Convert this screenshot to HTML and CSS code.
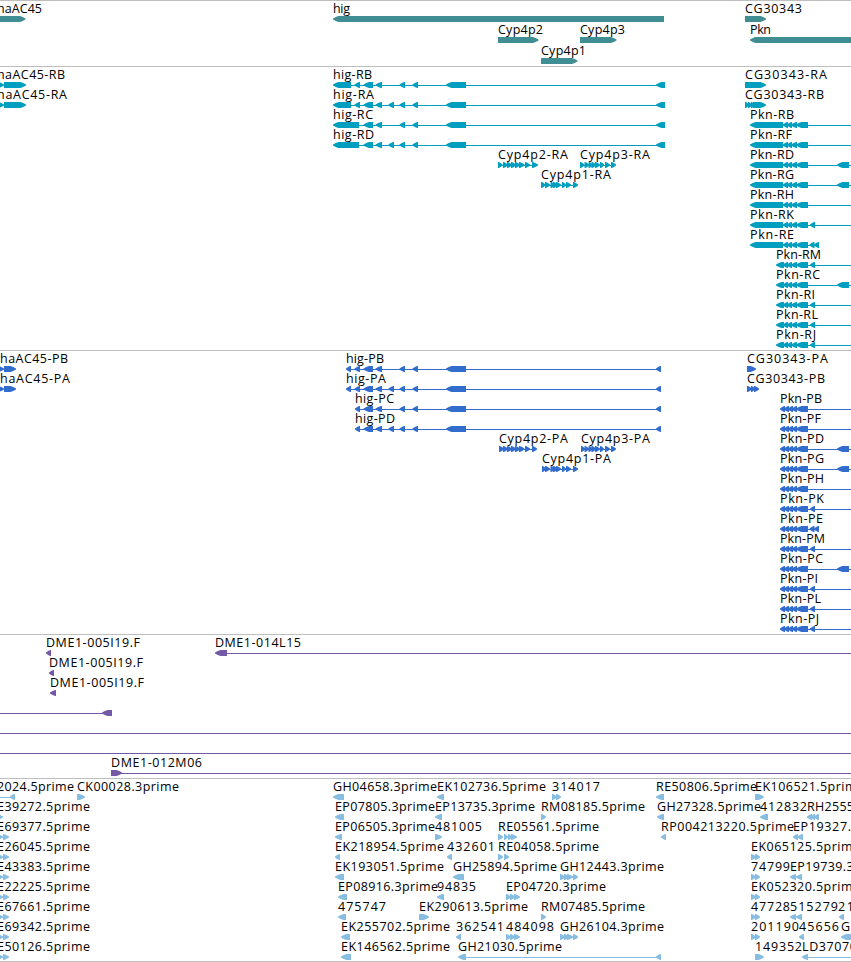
FILE: index.html
```html
<!DOCTYPE html>
<html lang="en">
<head>
<meta charset="utf-8">
<title>Genome tracks</title>
<link rel="stylesheet" href="styles.css">
</head>
<body>
<main class="browser" id="browser"></main>
<script src="tracks.js"></script>
</body>
</html>
```
FILE: styles.css
```css
* { box-sizing: border-box; }
body {
  margin: 0;
  background: #fff;
  overflow: hidden;
}
.browser {
  display: flex;
  flex-direction: column;
  width: 851px;
  height: 962px;
  border-bottom: 1px solid #bebebe;
  overflow: hidden;
}
.track {
  display: flex;
  flex-direction: column;
  flex: none;
  padding-top: 1px;
  border-top: 1px solid #bebebe;
}
.row {
  display: block;
  flex: none;
  width: 851px;
  height: 20px;
  overflow: visible;
}
.row text {
  font-family: "Open Sans", "Noto Sans", sans-serif;
  font-size: 12.5px;
  fill: #000;
}
.genes { height: 66px; color: #408e93; }
.genes .row { height: 21px; }
.transcripts { height: 284px; color: #009fc0; }
.proteins { height: 284px; color: #326dcd; }
.clones { height: 144px; color: #7459a7; }
.ests { height: 183px; color: #86bde0; }
.shape { fill: currentColor; }
```
FILE: tracks.js
```javascript
// Feature: [label, labelStart, labelEnd, glyphs]
// Glyphs: "<a:b" reverse arrow, ">a:b" forward arrow, "-a:b" intron line.
const pknBody = '<783:788 <787:792 <791:797 <796:808';
const pknP = '<780:785 <784:789 <788:793 <792:797 <796:808';
const pknM = '<776:784 ' + pknBody;
const higTail = '<363.5:373 <375.5:382 <399.5:405 <412.5:418 <446:466';
const extra = ' <388.5:394';
const cyp2 = '>498:502.5 >503:508 >507:512 >511:516 >515:520 >519:524.5 >525:530 >532:538 -500:536';
const cyp3 = '>580:584.5 >584.5:589 >588.5:593 >591.5:596 >595:600 >600:604 >605:610 >611:616 -582:614';
const cyp1 = '>541:545.5 >545:550 >550.5:555 >553:558 >556:561 >562:566 >566:571 >573:578 -543:576';

const rna = (name, glyphs) => ['Pkn-R' + name, 750, 794, '-783:851 <750:783 ' + pknBody + glyphs];
const rnaShort = (name, end, glyphs) => ['Pkn-R' + name, 776, end, '-783:851 ' + pknM + glyphs];
const prot = (name, end, glyphs) => ['Pkn-P' + name, 780, end, '-790:851 ' + pknP + glyphs];
const far = ' <837:849';
const near = ' <810:815';
const est = (name) => [name + '.5prime', -3, 90, '-0:5 >-3:3 >3:9'];

const tracks = {
  genes: [
    [['haAC45', -3, 42, '>-6:25.5'], ['hig', 333, 350, '<333:664'], ['CG30343', 745, 802, '>745:766']],
    [['Cyp4p2', 498, 543, '>498:538.5'], ['Cyp4p3', 580, 625, '>580:616.5'], ['Pkn', 750, 771, '<750:860']],
    [['Cyp4p1', 541, 586, '>541:577.5']]
  ],
  transcripts: [
    [['haAC45-RB', -3, 65, '>-2:4 >4:26'], ['hig-RB', 333, 372, '-340:660 <333:351 <354.5:360 ' + higTail + ' <656:665'], ['CG30343-RA', 745, 827, '>745:766']],
    [['haAC45-RA', -3, 67, '>-2:4 >4:26'], ['hig-RA', 333, 374, '-340:660 <333:351 <354.5:360 ' + higTail + extra + ' <656:665'], ['CG30343-RB', 745, 824, '>745:749 >748:752 >751:755 >753:766']],
    [['hig-RC', 333, 373, '-340:660 <333:359 ' + higTail + ' <656:665'], rna('B', '')],
    [['hig-RD', 333, 374, '-340:660 <333:359 ' + higTail + extra + ' <656:665'], ['Pkn-RF', 750, 792, '-783:851 <750:783 ' + pknBody]],
    [['Cyp4p2-RA', 498, 568, cyp2], ['Cyp4p3-RA', 580, 650, cyp3], rna('D', far)],
    [['Cyp4p1-RA', 541, 611, cyp1], rna('G', far)],
    [rna('H', '')],
    [rna('K', near)],
    [['Pkn-RE', 750, 794, '-783:819 <750:783 ' + pknBody + ' <809.5:814.5 <814:819']],
    [rnaShort('M', 821, near)],
    [rnaShort('C', 820, far)],
    [rnaShort('I', 815, near)],
    [rnaShort('L', 818, near)],
    [rnaShort('J', 816, near)]
  ],
  proteins: [
    [['haAC45-PB', 0, 68, '>-2:4 >4:16'], ['hig-PB', 346, 384, '-350:660 <346:351 <354.5:360 ' + higTail + ' <656:661'], ['CG30343-PA', 747, 828, '>747:756']],
    [['haAC45-PA', 0, 70, '>-2:4 >4:16'], ['hig-PA', 346, 386, '-350:660 <346:351 <354.5:360 ' + higTail + extra + ' <656:661'], ['CG30343-PB', 747, 825, '>747:752 >751:755 >754:759']],
    [['hig-PC', 355, 394, '-358:660 <355:360 ' + higTail + ' <656:661'], prot('B', 822, '')],
    [['hig-PD', 355, 395, '-358:660 <355:360 ' + higTail + extra + ' <656:661'], prot('F', 821, '')],
    [['Cyp4p2-PA', 499, 568, cyp2.replace('498:502.5', '499:504').replace('532:538', '532:537')], ['Cyp4p3-PA', 581, 650, cyp3.replace('580:584.5', '581:585')], prot('D', 824, far)],
    [['Cyp4p1-PA', 542, 611, cyp1.replace('541:545.5', '542:546')], prot('G', 824, far)],
    [prot('H', 824, '')],
    [prot('K', 824, near)],
    [['Pkn-PE', 780, 823, '-790:819 ' + pknP + ' <809.5:814.5 <814:819']],
    [prot('M', 825, near)],
    [prot('C', 823, far)],
    [prot('I', 818, near)],
    [prot('L', 821, near)],
    [prot('J', 819, near)]
  ],
  clones: [
    [['DME1-005I19.F', 46, 140, '<46:51'], ['DME1-014L15', 215, 301, '-220:851 <215:227']],
    [['DME1-005I19.F', 49, 143, '<49:54']],
    [['DME1-005I19.F', 50, 144, '<50:56']],
    [['', 0, 0, '-0:105 <102:112']],
    [['', 0, 0, '-0:851']],
    [['', 0, 0, '-0:851']],
    [['DME1-012M06', 111, 202, '-115:851 >111:122']]
  ],
  ests: [
    [['2024.5prime', -3, 74, '-0:12 <10:15'], ['CK00028.3prime', 77, 179, '>77:85'], ['GH04658.3prime', 333, 437, '<333:344'], ['EK102736.5prime', 437, 546, '<437:444'], ['314017', 552, 600, '>552:557 >556:561'], ['RE50806.5prime', 656, 757, '<656:664'], ['EK106521.5prime', 755, 864, '>755:764']],
    [['E39272.5prime', -3, 90, '>-3:3'], ['EP07805.3prime', 335, 435, '<335:344'], ['EP13735.3prime', 435, 535, '<435:442'], ['RM08185.5prime', 541, 645, '>541:546'], ['GH27328.5prime', 657, 761, '<657:664'], ['412832', 760, 807, '<760:768'], ['RH2555', 807, 854, '<807:812 <811:815 <814:819']],
    [est('E69377'), ['EP06505.3prime', 335, 435, '<335:342'], ['481005', 435, 482, '>435:442'], ['RE05561.5prime', 498, 599, '>498:503 >504:508 >508:512 >511:517'], ['RP004213220.5prime', 661, 794, '<661:666'], ['EP19327.', 793, 851, '<793:798 <797:803']],
    [est('E26045'), ['EK218954.5prime', 335, 444, '<335:340'], ['432601', 447, 495, '<447:452'], ['RE04058.5prime', 498, 599, '>498:503 >504:509'], ['EK065125.5prime', 751, 860, '>751:756 >755:760']],
    [est('E43383'), ['EK193051.5prime', 335, 444, '<335:344'], ['GH25894.5prime', 453, 557, '<453:464'], ['GH12443.3prime', 560, 664, '-562:575 >560:565 >564:569 >567:573 >573:578'], ['74799', 751, 790, '>751:756 >755:760'], ['EP19739.3prime', 790, 890, '<790:796 <796:802']],
    [est('E22225'), ['EP08916.3prime', 338, 438, '<338:347'], ['94835', 437, 476, '<437:444'], ['EP04720.3prime', 506, 606, '>506:511 >510:515 >514:520'], ['EK052320.5prime', 751, 860, '>751:756 >755:760']],
    [est('E67661'), ['475747', 338, 386, '<338:346'], ['EK290613.5prime', 419, 528, '>419:429'], ['RM07485.5prime', 541, 645, '>541:546'], ['47728', 751, 790, '>751:756 >755:760'], ['515279', 790, 838, '<790:796 <796:802'], ['21', 838, 854, '<839:844']],
    [est('E69342'), ['EK255702.5prime', 341, 450, '<341:350'], ['362541', 456, 504, '<456:461'], ['484098', 506, 554, '>506:511 >510:515 >514:520'], ['GH26104.3prime', 560, 664, '-562:575 >560:565 >564:569 >567:573 >573:578'], ['201190', 751, 799, '>751:756 >755:760'], ['45656', 799, 839, '<799:804'], ['G', 841, 850, '<841:853']],
    [est('E50126'), ['EK146562.5prime', 341, 450, '<341:351'], ['GH21030.5prime', 458, 562, '-464:658 <458:466 <656:661'], ['149352', 755, 802, '>755:764'], ['LD37070', 802, 857, '-806:851 <802:808']]
  ]
};

const NS = 'http://www.w3.org/2000/svg';
function add(parent, tag, attrs) {
  const el = document.createElementNS(NS, tag);
  for (const key in attrs) el.setAttribute(key, attrs[key]);
  parent.appendChild(el);
  return el;
}

function drawGlyph(svg, code) {
  const [a, b] = code.slice(1).split(':').map(Number);
  if (code[0] === '-') {
    add(svg, 'rect', { class: 'shape', x: a, y: 17, width: b - a, height: 1 });
    return;
  }
  const head = Math.min(5.5, b - a - 0.8);
  // Distance from the tip paired with y, listed clockwise from the upper tip edge.
  const tip = code[0] === '<' ? a : b;
  const dir = code[0] === '<' ? 1 : -1;
  const outline = [
    [0, 16.4], [head * 0.5, 15], [head, 14], [b - a, 14],
    [b - a, 20], [head, 20], [head * 0.5, 19], [0, 17.6]
  ];
  const points = outline.map(([d, y]) => (tip + dir * d) + ',' + y).join(' ');
  add(svg, 'polygon', { class: 'shape', points });
}

const browser = document.getElementById('browser');
for (const name in tracks) {
  const section = document.createElement('section');
  section.className = 'track ' + name;
  browser.appendChild(section);
  for (const features of tracks[name]) {
    const svg = add(section, 'svg', { class: 'row' });
    for (const [label, start, end, glyphs] of features) {
      glyphs.split(' ').filter(Boolean).forEach(code => drawGlyph(svg, code));
      if (label) {
        const text = add(svg, 'text', { x: start, y: 11, textLength: end - start, lengthAdjust: 'spacing' });
        text.textContent = label;
      }
    }
  }
}
```
